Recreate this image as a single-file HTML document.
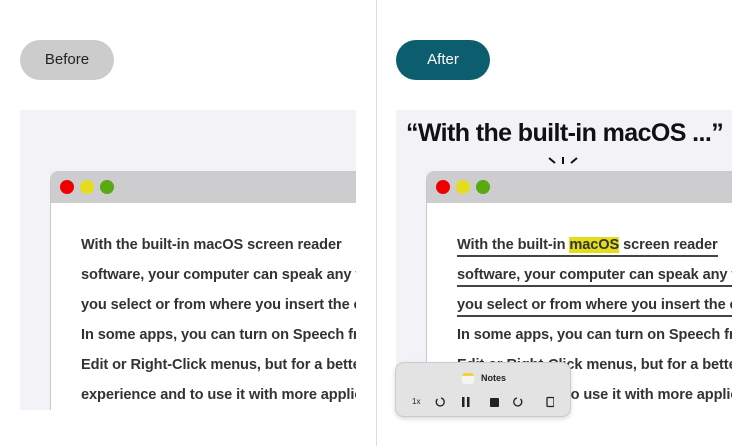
<!DOCTYPE html>
<html><head><meta charset="utf-8"><style>
*{margin:0;padding:0;box-sizing:border-box}
body{width:752px;height:446px;background:#fff;position:relative;overflow:hidden;font-family:"Liberation Sans",sans-serif}
.div{position:absolute;left:376px;top:0;width:1px;height:446px;background:#ddd}
.pill{position:absolute;top:40px;width:94px;height:40px;border-radius:20px;font-size:15px;line-height:40px;text-align:center}
.panel{position:absolute;top:110px;width:336px;height:300px;background:#f2f2f7;overflow:hidden}
.win{position:absolute;left:30px;top:61px;width:340px;height:260px;background:#fff;border-radius:8px 0 0 0;border-left:1px solid #c8c8cc;overflow:hidden}
.bar{height:32px;background:#cdcdd0;position:relative}
.dot{position:absolute;top:9px;width:14px;height:14px;border-radius:50%}
.txt{position:absolute;left:30px;top:64px;font-size:14.6px;font-weight:bold;color:#333;white-space:nowrap;letter-spacing:-0.1px}
.txt div{height:30px;line-height:20px}
.u{display:inline-block;border-bottom:2px solid #444;line-height:19px}
.hl{background:#e4de1a}
</style></head><body>
<div class="div"></div>
<div class="pill" style="left:20px;background:#cccccc;color:#222">Before</div>
<div class="pill" style="left:396px;background:#0c5d6d;color:#fff">After</div>

<div class="panel" style="left:20px">
 <div class="win">
  <div class="bar"><span class="dot" style="left:9px;background:#e00"></span><span class="dot" style="left:29px;background:#e4dd1e"></span><span class="dot" style="left:49px;background:#5aa812"></span></div>
  <div class="txt">
   <div>With the built-in macOS screen reader</div>
   <div>software, your computer can speak any text</div>
   <div>you select or from where you insert the cursor.</div>
   <div>In some apps, you can turn on Speech from the</div>
   <div>Edit or Right-Click menus, but for a better</div>
   <div>experience and to use it with more applications</div>
  </div>
 </div>
</div>

<div class="panel" style="left:396px">
 <div style="position:absolute;left:10px;top:9px;font-size:25px;font-weight:bold;color:#111;letter-spacing:-0.6px;white-space:nowrap">“With the built-in macOS ...”</div>
 <svg style="position:absolute;left:150px;top:46px" width="34" height="16"><g stroke="#111" stroke-width="2"><line x1="17" y1="1" x2="17" y2="8"/><line x1="3" y1="2" x2="9" y2="7"/><line x1="31" y1="2" x2="25" y2="7"/></g></svg>
 <div class="win">
  <div class="bar"><span class="dot" style="left:9px;background:#e00"></span><span class="dot" style="left:29px;background:#e4dd1e"></span><span class="dot" style="left:49px;background:#5aa812"></span></div>
  <div class="txt">
   <div><span class="u">With the built-in <span class="hl">macOS</span> screen reader</span></div>
   <div><span class="u">software, your computer can speak any text</span></div>
   <div><span class="u">you select or from where you insert the cursor.</span></div>
   <div>In some apps, you can turn on Speech from the</div>
   <div>Edit or Right-Click menus, but for a better</div>
   <div>experience and to use it with more applications</div>
  </div>
 </div>
</div>

<div style="position:absolute;left:395px;top:362px;width:176px;height:55px;background:#e3e3e3;border:1px solid #ccc;border-radius:9px;box-shadow:0 2px 5px rgba(0,0,0,.15)">
 <div style="position:absolute;left:66px;top:10px;width:12px;height:11px;border-radius:3px;background:#f4f4f4;border-top:3px solid #f5d23a"></div>
 <div style="position:absolute;left:85px;top:10px;font-size:9px;font-weight:bold;color:#222">Notes</div>
 <div style="position:absolute;left:16px;top:34px;font-size:8px;color:#222">1x</div>
 <svg style="position:absolute;left:38px;top:32px" width="120" height="14">
  <g fill="none" stroke="#222" stroke-width="1.3">
   <path d="M3.5 4 A4 4 0 1 0 7 3"/>
   <path d="M86.5 4 A4 4 0 1 1 83 3"/>
   <rect x="113" y="2.5" width="7" height="9" rx="1"/>
  </g>
  <rect x="28" y="2" width="2.5" height="10" fill="#222"/><rect x="33" y="2" width="2.5" height="10" fill="#222"/>
  <rect x="56" y="3" width="9" height="9" rx="1" fill="#222"/>
 </svg>
</div>
</body></html>
